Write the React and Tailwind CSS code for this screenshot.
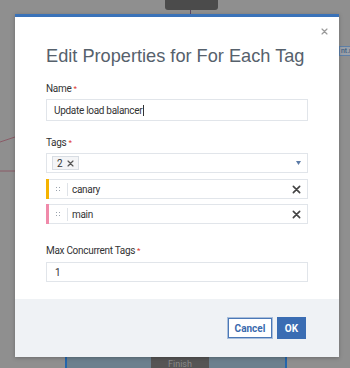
import React from "react";

const font = { fontFamily: "Roboto, 'Liberation Sans', Arial, sans-serif" };

const Label = ({ children }) => (
  <div className="text-[10px] leading-[14px] text-[#333] tracking-[-0.3px]">
    {children}
    <span className="text-[#e0342c] ml-[2px] text-[8px] align-top">*</span>
  </div>
);

const XIcon = ({ size = 8, className = "" }) => (
  <svg width={size} height={size} viewBox="0 0 10 10" className={className}>
    <path d="M1.5 1.5 L8.5 8.5 M8.5 1.5 L1.5 8.5" stroke="currentColor" strokeWidth="1.8" strokeLinecap="round" />
  </svg>
);

const Grip = () => (
  <div className="grid grid-cols-2 gap-[2px] w-[4px] mx-[7px]">
    <span className="w-[1px] h-[1px] bg-[#9aa3ad]" />
    <span className="w-[1px] h-[1px] bg-[#9aa3ad]" />
    <span className="w-[1px] h-[1px] bg-[#9aa3ad]" />
    <span className="w-[1px] h-[1px] bg-[#9aa3ad]" />
  </div>
);

const TagRow = ({ color, name }) => (
  <div className="flex items-center h-[20px] border border-[#e1e5ea] bg-white">
    <div className={`self-stretch w-[3px] -ml-px -my-px ${color}`} />
    <Grip />
    <div className="w-px h-[13px] bg-[#dfe3e8]" />
    <span className="ml-[4px] text-[10px] text-[#333] flex-1 tracking-[-0.3px]">{name}</span>
    <XIcon size={9} className="text-[#444] mr-[6px]" />
  </div>
);

export default function App() {
  return (
    <div className="relative w-[350px] h-[368px] bg-[#8f8f8f] overflow-hidden" style={font}>
      {/* canvas behind the overlay */}
      <div className="absolute left-[165px] top-0 w-[53px] h-[10px] bg-[#4b4b4b] rounded-b-[3px]" />
      <div className="absolute left-[190px] top-[10px] w-px h-[5px] bg-[#5b4a66]" />
      <svg className="absolute left-0 top-0" width="350" height="368">
        <line x1="0" y1="142" x2="15" y2="137" stroke="#8a5a66" strokeWidth="1" />
        <line x1="0" y1="171" x2="15" y2="171" stroke="#8a5a66" strokeWidth="1" />
      </svg>
      <div className="absolute left-[339px] top-[46px] w-[20px] h-[10px] border border-[#5d7fa8] bg-[#9aa0a8] text-[7px] leading-[8px] text-[#2e4f78] pl-px">
        nt.r
      </div>
      <div className="absolute left-[65px] top-[357px] w-[222px] h-[20px] bg-[#6c808e] border-x-2 border-[#2466ad]">
        <div className="ml-[84px] w-[58px] h-full bg-[#555] text-[9px] leading-[10px] text-[#8a8a8a] text-center pt-[2px]">
          Finish
        </div>
      </div>

      {/* modal */}
      <div className="relative ml-[15px] mt-[14px] w-[324px] bg-white border-t-[3px] border-[#3a72b8] shadow-[0_1px_4px_rgba(0,0,0,0.25)]">
        <button className="absolute right-[11px] top-[11px] text-[#9a9a9a]">
          <XIcon size={7} />
        </button>
        <div className="px-[31px] pt-[27px] pb-[17px]">
          <h1
            className="text-[18.2px] leading-[24px] text-[#56616c] whitespace-nowrap"
            style={{ fontFamily: "'Liberation Sans', Arial, sans-serif" }}
          >
            Edit Properties for For Each Tag
          </h1>

          <div className="mt-[14px]">
            <Label>Name</Label>
            <div className="mt-[3px] h-[22px] border border-[#e1e5ea] flex items-center pl-[7px] text-[10px] text-[#333] tracking-[-0.3px]">
              Update load balancer
              <span className="w-px h-[11px] bg-[#333] ml-px" />
            </div>
          </div>

          <div className="mt-[15px]">
            <Label>Tags</Label>
            <div className="mt-[3px] h-[20px] border border-[#e1e5ea] flex items-center pl-[5px] pr-[6px]">
              <div className="flex items-center gap-[4px] h-[14px] px-[4px] border border-[#d8dde3] bg-[#f4f5f7] text-[10px] text-[#333]">
                2
                <XIcon size={7} className="text-[#555]" />
              </div>
              <div className="flex-1" />
              <svg width="5" height="4" viewBox="0 0 5 4">
                <path d="M0 0 L5 0 L2.5 4 Z" fill="#5a7aa6" />
              </svg>
            </div>
            <div className="mt-[6px] flex flex-col gap-[5px]">
              <TagRow color="bg-[#f5b300]" name="canary" />
              <TagRow color="bg-[#f08aaa]" name="main" />
            </div>
          </div>

          <div className="mt-[20px]">
            <Label>Max Concurrent Tags</Label>
            <div className="mt-[4px] h-[20px] border border-[#e1e5ea] flex items-center pl-[8px] text-[10px] text-[#333]">
              1
            </div>
          </div>
        </div>

        <div className="bg-[#eff2f5] h-[58px] flex items-center justify-end gap-[4px] pr-[33px]">
          <button className="h-[22px] w-[46px] border-2 border-[#a9bfdc] bg-white text-[10px] font-bold text-[#3a6aad] outline outline-1 outline-[#4b78b6] -outline-offset-2">
            Cancel
          </button>
          <button className="h-[22px] w-[29px] bg-[#3a6db3] text-[10px] font-bold text-white">
            OK
          </button>
        </div>
      </div>
    </div>
  );
}
